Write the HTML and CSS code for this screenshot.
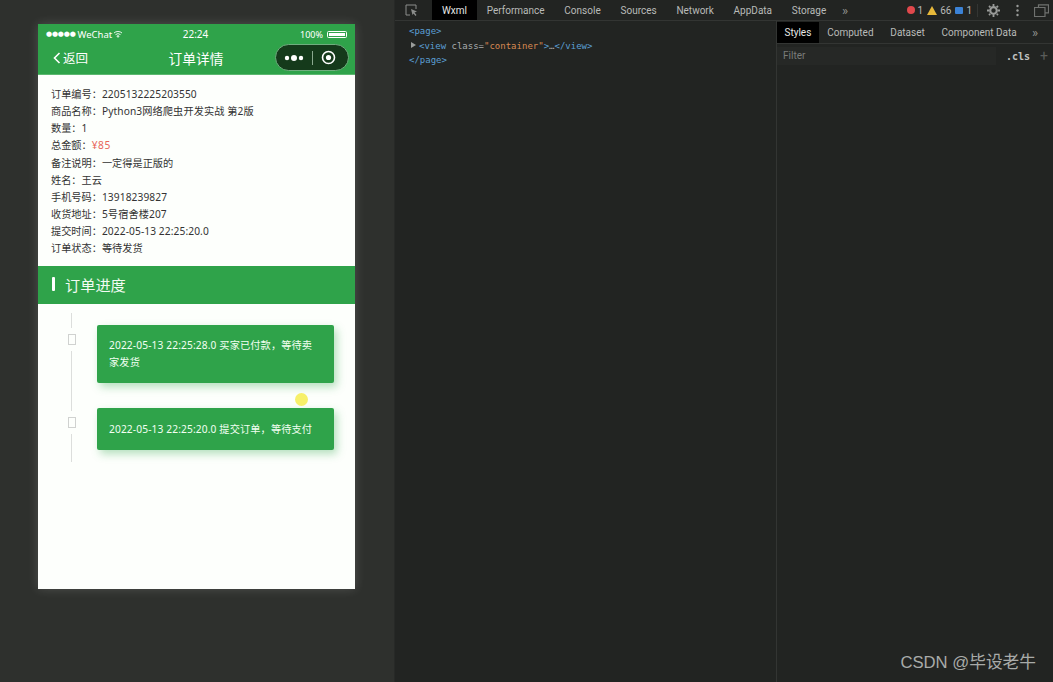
FILE: index.html
```html
<!DOCTYPE html>
<html lang="en">
<head>
    <meta charset="UTF-8">
    <meta name="viewport" content="width=device-width, initial-scale=1.0">
    <title>订单详情</title>
    <link rel="stylesheet" href="styles.css">
</head>
<body>
    <div class="app">
        <!-- Simulator -->
        <section class="simulator">
            <div class="phone">
                <div class="status-bar">
                    <div class="status-left">
                        <span class="signal">●●●●●</span>
                        <span>WeChat</span>
                        <svg class="wifi" width="10" height="8" viewBox="0 0 10 8"><path d="M1 3a6 6 0 0 1 8 0M2.500 4.600a4 4 0 0 1 5 0M5 7.400 3.900 6.100a1.800 1.800 0 0 1 2.200 0z" fill="none" stroke="#fff" stroke-width="0.9"/></svg>
                    </div>
                    <div class="status-time">22:24</div>
                    <div class="status-right">
                        <span>100%</span>
                        <span class="battery"><span class="battery-fill"></span></span>
                    </div>
                </div>
                <div class="nav-bar">
                    <div class="nav-back">
                        <svg width="8" height="12" viewBox="0 0 8 12"><path d="M6.500 1 1.500 6l5 5" fill="none" stroke="#fff" stroke-width="1.600"/></svg>
                        <span>返回</span>
                    </div>
                    <div class="nav-title">订单详情</div>
                    <div class="capsule">
                        <svg width="20" height="8" viewBox="0 0 20 8"><circle cx="3" cy="4" r="2.200" fill="#fff"/><circle cx="10" cy="4" r="3" fill="#fff"/><circle cx="17" cy="4" r="2.200" fill="#fff"/></svg>
                        <span class="capsule-line"></span>
                        <svg width="15" height="15" viewBox="0 0 15 15"><circle cx="7.500" cy="7.500" r="6" fill="none" stroke="#fff" stroke-width="1.600"/><circle cx="7.500" cy="7.500" r="2.600" fill="#fff"/></svg>
                    </div>
                </div>

                <div class="order-info">
                    <p>订单编号：<span class="num">2205132225203550</span></p>
                    <p>商品名称：<span class="num">Python3网络爬虫开发实战 第2版</span></p>
                    <p>数量：<span class="num">1</span></p>
                    <p>总金额：<span class="price">¥85</span></p>
                    <p>备注说明：一定得是正版的</p>
                    <p>姓名：王云</p>
                    <p>手机号码：<span class="num">13918239827</span></p>
                    <p>收货地址：<span class="num">5号宿舍楼207</span></p>
                    <p>提交时间：<span class="num">2022-05-13 22:25:20.0</span></p>
                    <p>订单状态：等待发货</p>
                </div>

                <div class="section-head"><span class="section-bar"></span>订单进度</div>

                <div class="timeline">
                    <div class="step step-first">
                        <div class="rail">
                            <span class="rail-line rail-top"></span>
                            <span class="rail-box"></span>
                            <span class="rail-line rail-fill"></span>
                        </div>
                        <div class="step-card">2022-05-13 22:25:28.0 买家已付款，等待卖家发货</div>
                    </div>
                    <div class="step step-last">
                        <div class="rail">
                            <span class="rail-line rail-stub"></span>
                            <span class="rail-box"></span>
                            <span class="rail-line rail-fill"></span>
                        </div>
                        <div class="step-card">2022-05-13 22:25:20.0 提交订单，等待支付</div>
                    </div>
                </div>
                <span class="click-dot"></span>
            </div>
        </section>

        <!-- Devtools -->
        <section class="devtools">
            <div class="top-tabs">
                <svg class="inspect" width="13" height="13" viewBox="0 0 13 13"><path d="M5 11H1V1h10v4" fill="none" stroke="#8b8d8b" stroke-width="1"/><path d="M6 5l6 2.500-2.500 1L11.500 11l-1 1-2-2.500L7.500 11z" fill="#8b8d8b"/></svg>
                <span class="tab tab-active">Wxml</span>
                <span class="tab">Performance</span>
                <span class="tab">Console</span>
                <span class="tab">Sources</span>
                <span class="tab">Network</span>
                <span class="tab">AppData</span>
                <span class="tab">Storage</span>
                <span class="more">»</span>
                <div class="top-right">
                    <span class="badge-dot"></span><span class="count">1</span>
                    <svg width="10" height="9" viewBox="0 0 10 9"><path d="M5 0l5 9H0z" fill="#e8b93a"/></svg><span class="count">66</span>
                    <span class="badge-msg"></span><span class="count">1</span>
                    <span class="top-sep"></span>
                    <svg class="gear" width="13" height="13" viewBox="0 0 13 13"><circle cx="6.500" cy="6.500" r="3.300" fill="none" stroke="#9a9c9a" stroke-width="2.200"/><path d="M6.500 0v13M0 6.500h13M2 2l9 9M11 2l-9 9" stroke="#9a9c9a" stroke-width="1.800" stroke-dasharray="2 9"/></svg>
                    <svg class="kebab" width="3" height="13" viewBox="0 0 3 13"><circle cx="1.500" cy="2" r="1.200" fill="#9a9c9a"/><circle cx="1.500" cy="6.500" r="1.200" fill="#9a9c9a"/><circle cx="1.500" cy="11" r="1.200" fill="#9a9c9a"/></svg>
                    <svg width="15" height="13" viewBox="0 0 15 13"><path d="M4.500 3V.8h10v8h-3M.5 3.500h10.500v9H.5z" fill="none" stroke="#6f716f" stroke-width="1.200"/></svg>
                </div>
            </div>
            <div class="panels">
                <div class="wxml-tree">
                    <div class="tree-line"><span class="tag">&lt;page&gt;</span></div>
                    <div class="tree-line tree-child"><span class="arrow"></span><span class="tag">&lt;view</span> <span class="attr">class=</span><span class="val">"container"</span><span class="tag">&gt;</span><span class="attr">…</span><span class="tag">&lt;/view&gt;</span></div>
                    <div class="tree-line"><span class="tag">&lt;/page&gt;</span></div>
                </div>
                <div class="styles-panel">
                    <div class="side-tabs">
                        <span class="tab tab-active side-tab">Styles</span>
                        <span class="tab side-tab">Computed</span>
                        <span class="tab side-tab">Dataset</span>
                        <span class="tab side-tab">Component Data</span>
                        <span class="more">»</span>
                    </div>
                    <div class="filter-row">
                        <span class="filter-box">Filter</span>
                        <span class="cls">.cls</span>
                        <span class="plus">+</span>
                    </div>
                </div>
            </div>
            <div class="watermark">CSDN @毕设老牛</div>
        </section>
    </div>
</body>
</html>
```

FILE: styles.css
```css
/* Reset and Base Styles */
* {
    margin: 0;
    padding: 0;
    box-sizing: border-box;
}

body {
    font-family: "Noto Sans", "Noto Sans CJK SC", sans-serif;
    background: #222422;
    overflow: hidden;
}

.app {
    display: flex;
    width: 1053px;
    height: 682px;
}

/* Simulator */
.simulator {
    width: 395px;
    background: #2e302d;
    padding: 24px 0 0 38px;
    border-right: 1px solid #272927;
}

.phone {
    position: relative;
    display: flex;
    flex-direction: column;
    width: 317px;
    height: 565px;
    background: #fdfffc;
    box-shadow: 0 0 10px rgba(255, 255, 255, 0.16);
}

.status-bar {
    display: grid;
    grid-template-columns: 1fr auto 1fr;
    align-items: center;
    height: 20px;
    padding: 0 8px;
    background: #2fa34a;
    color: #fff;
    font-size: 9.500px;
}

.status-left {
    display: flex;
    align-items: center;
    gap: 2px;
}

.signal {
    font-size: 7px;
    letter-spacing: -0.200px;
    font-family: "DejaVu Sans", sans-serif;
}

.wifi {
    margin-left: -1px;
}

.status-time {
    font-size: 10px;
    padding-right: 2px;
}

.status-right {
    display: flex;
    align-items: center;
    justify-content: flex-end;
    gap: 4px;
    font-size: 9px;
}

.battery {
    display: block;
    width: 20px;
    height: 7px;
    border: 1px solid #fff;
    border-radius: 1.500px;
    padding: 1px;
}

.battery-fill {
    display: block;
    height: 100%;
    background: #fff;
}

.nav-bar {
    display: grid;
    grid-template-columns: 1fr auto 1fr;
    align-items: center;
    height: 31px;
    padding: 0 6px 3px 15px;
    background: #2fa34a;
    color: #fff;
    border-bottom: 1px solid #5cb870;
}

.nav-back {
    display: flex;
    align-items: center;
    gap: 2px;
    font-size: 12.500px;
}

.nav-title {
    font-size: 13.700px;
    padding-right: 10px;
}

.capsule {
    justify-self: end;
    display: flex;
    align-items: center;
    gap: 8px;
    width: 74px;
    height: 27px;
    padding-left: 8px;
    background: #153a1b;
    border: 1px solid #6fae7e;
    border-radius: 14px;
}

.capsule-line {
    width: 1px;
    height: 14px;
    background: #8aa98f;
}

/* Order Info */
.order-info {
    height: 191px;
    padding: 11px 13px 0;
    color: #333;
    font-size: 10.200px;
    line-height: 17.150px;
}

.num {
    letter-spacing: 0.100px;
}

.price {
    color: #e8655a;
    letter-spacing: 0.500px;
}

.section-head {
    display: flex;
    align-items: center;
    gap: 10px;
    height: 38px;
    padding: 0 0 2px 14px;
    background: #2fa34a;
    color: #f2fbf2;
    font-size: 15.200px;
}

.section-bar {
    width: 3px;
    height: 14px;
    background: #fff;
    border-radius: 1px;
}

/* Timeline */
.timeline {
    padding: 9px 21px 0 30px;
}

.step {
    display: flex;
}

.rail {
    display: flex;
    flex-direction: column;
    align-items: center;
    gap: 6px;
    width: 7px;
    margin-right: 22px;
}

.rail-line {
    width: 1px;
    background: #dcdedc;
}

.rail-top {
    height: 15px;
}

.rail-stub {
    height: 3px;
}

.rail-fill {
    flex: 1;
}

.rail-box {
    width: 8px;
    height: 11px;
    border: 1px solid #d0d2d0;
    flex-shrink: 0;
}

.step-first {
    height: 95px;
}

.step-first .step-card {
    margin-top: 12px;
    height: 58px;
}

.step-last {
    height: 54px;
}

.step-last .step-card {
    height: 42px;
    line-height: 42px;
    padding-top: 0;
}

.step-card {
    width: 237px;
    padding: 12px 14px 0 12px;
    background: #2fa34a;
    color: #f2fff2;
    font-size: 10.200px;
    letter-spacing: 0.130px;
    line-height: 16.500px;
    border-radius: 2px;
    box-shadow: 3px 4px 8px rgba(47, 163, 74, 0.35);
}

.click-dot {
    position: absolute;
    left: 257px;
    top: 369px;
    width: 13px;
    height: 13px;
    background: #f7f06a;
    border-radius: 50%;
}

/* Devtools */
.devtools {
    position: relative;
    flex: 1;
    display: flex;
    flex-direction: column;
    color: #b9bbb9;
    font-family: Roboto, sans-serif;
    font-size: 10px;
}

.top-tabs {
    display: flex;
    align-items: center;
    height: 21px;
    padding-left: 10px;
    border-bottom: 1px solid #333533;
}

.inspect {
    margin-right: 14px;
}

.tab {
    display: flex;
    align-items: center;
    height: 20px;
    padding: 0 9.900px;
    white-space: nowrap;
}

.tab-active {
    background: #000;
    color: #e6e8e6;
}

.more {
    margin-left: 6px;
    font-size: 13px;
    color: #8f918f;
}

.top-right {
    display: flex;
    align-items: center;
    margin-left: auto;
    padding-right: 4px;
}

.badge-dot {
    width: 8px;
    height: 8px;
    background: #e0484c;
    border-radius: 50%;
}

.badge-msg {
    width: 8px;
    height: 7px;
    background: #3b82d6;
    border-radius: 1px;
}

.count {
    margin: 0 4px 0 3px;
}

.top-sep {
    width: 1px;
    height: 13px;
    margin: 0 9px 0 1px;
    background: #333533;
}

.gear {
    margin-right: 16px;
}

.kebab {
    margin-right: 15px;
}

.panels {
    flex: 1;
    display: flex;
}

.wxml-tree {
    width: 381px;
    padding: 3px 0 0 14px;
    font-family: "DejaVu Sans Mono", monospace;
    font-size: 9px;
    line-height: 14.500px;
}

.tree-child {
    position: relative;
    padding-left: 10px;
}

.arrow {
    position: absolute;
    left: 2px;
    top: 3px;
    border-left: 5px solid #9a9c9a;
    border-top: 3.500px solid transparent;
    border-bottom: 3.500px solid transparent;
}

.tag {
    color: #5b9fd4;
}

.attr {
    color: #a9abad;
}

.val {
    color: #d98a52;
}

.styles-panel {
    flex: 1;
    border-left: 1px solid #333533;
}

.side-tabs {
    display: flex;
    align-items: center;
    height: 23px;
    padding-top: 1px;
    border-bottom: 1px solid #333533;
}

.side-tab {
    height: 21px;
    padding: 0 8.400px;
}

.side-tab.tab-active {
    padding: 0 7.500px;
}

.side-tabs .more {
    margin-left: 7px;
}

.filter-row {
    display: flex;
    align-items: center;
    height: 20px;
    margin-top: 2px;
    padding-left: 6px;
}

.filter-box {
    flex: 1;
    height: 18px;
    line-height: 18px;
    color: #7a7c7a;
    background: #262826;
    margin-left: -6px;
    padding-left: 6px;
    margin-right: 10px;
}

.cls {
    font-family: "DejaVu Sans Mono", monospace;
    font-weight: 700;
    font-size: 10px;
    color: #c0c2c0;
    margin-right: 10px;
}

.plus {
    font-size: 14px;
    color: #5a5c5a;
    margin-right: 5px;
}

.watermark {
    position: absolute;
    right: 17px;
    bottom: 9px;
    color: #a9aba9;
    font-family: "Liberation Sans", "Noto Sans CJK SC", sans-serif;
    font-size: 16.700px;
}
```
